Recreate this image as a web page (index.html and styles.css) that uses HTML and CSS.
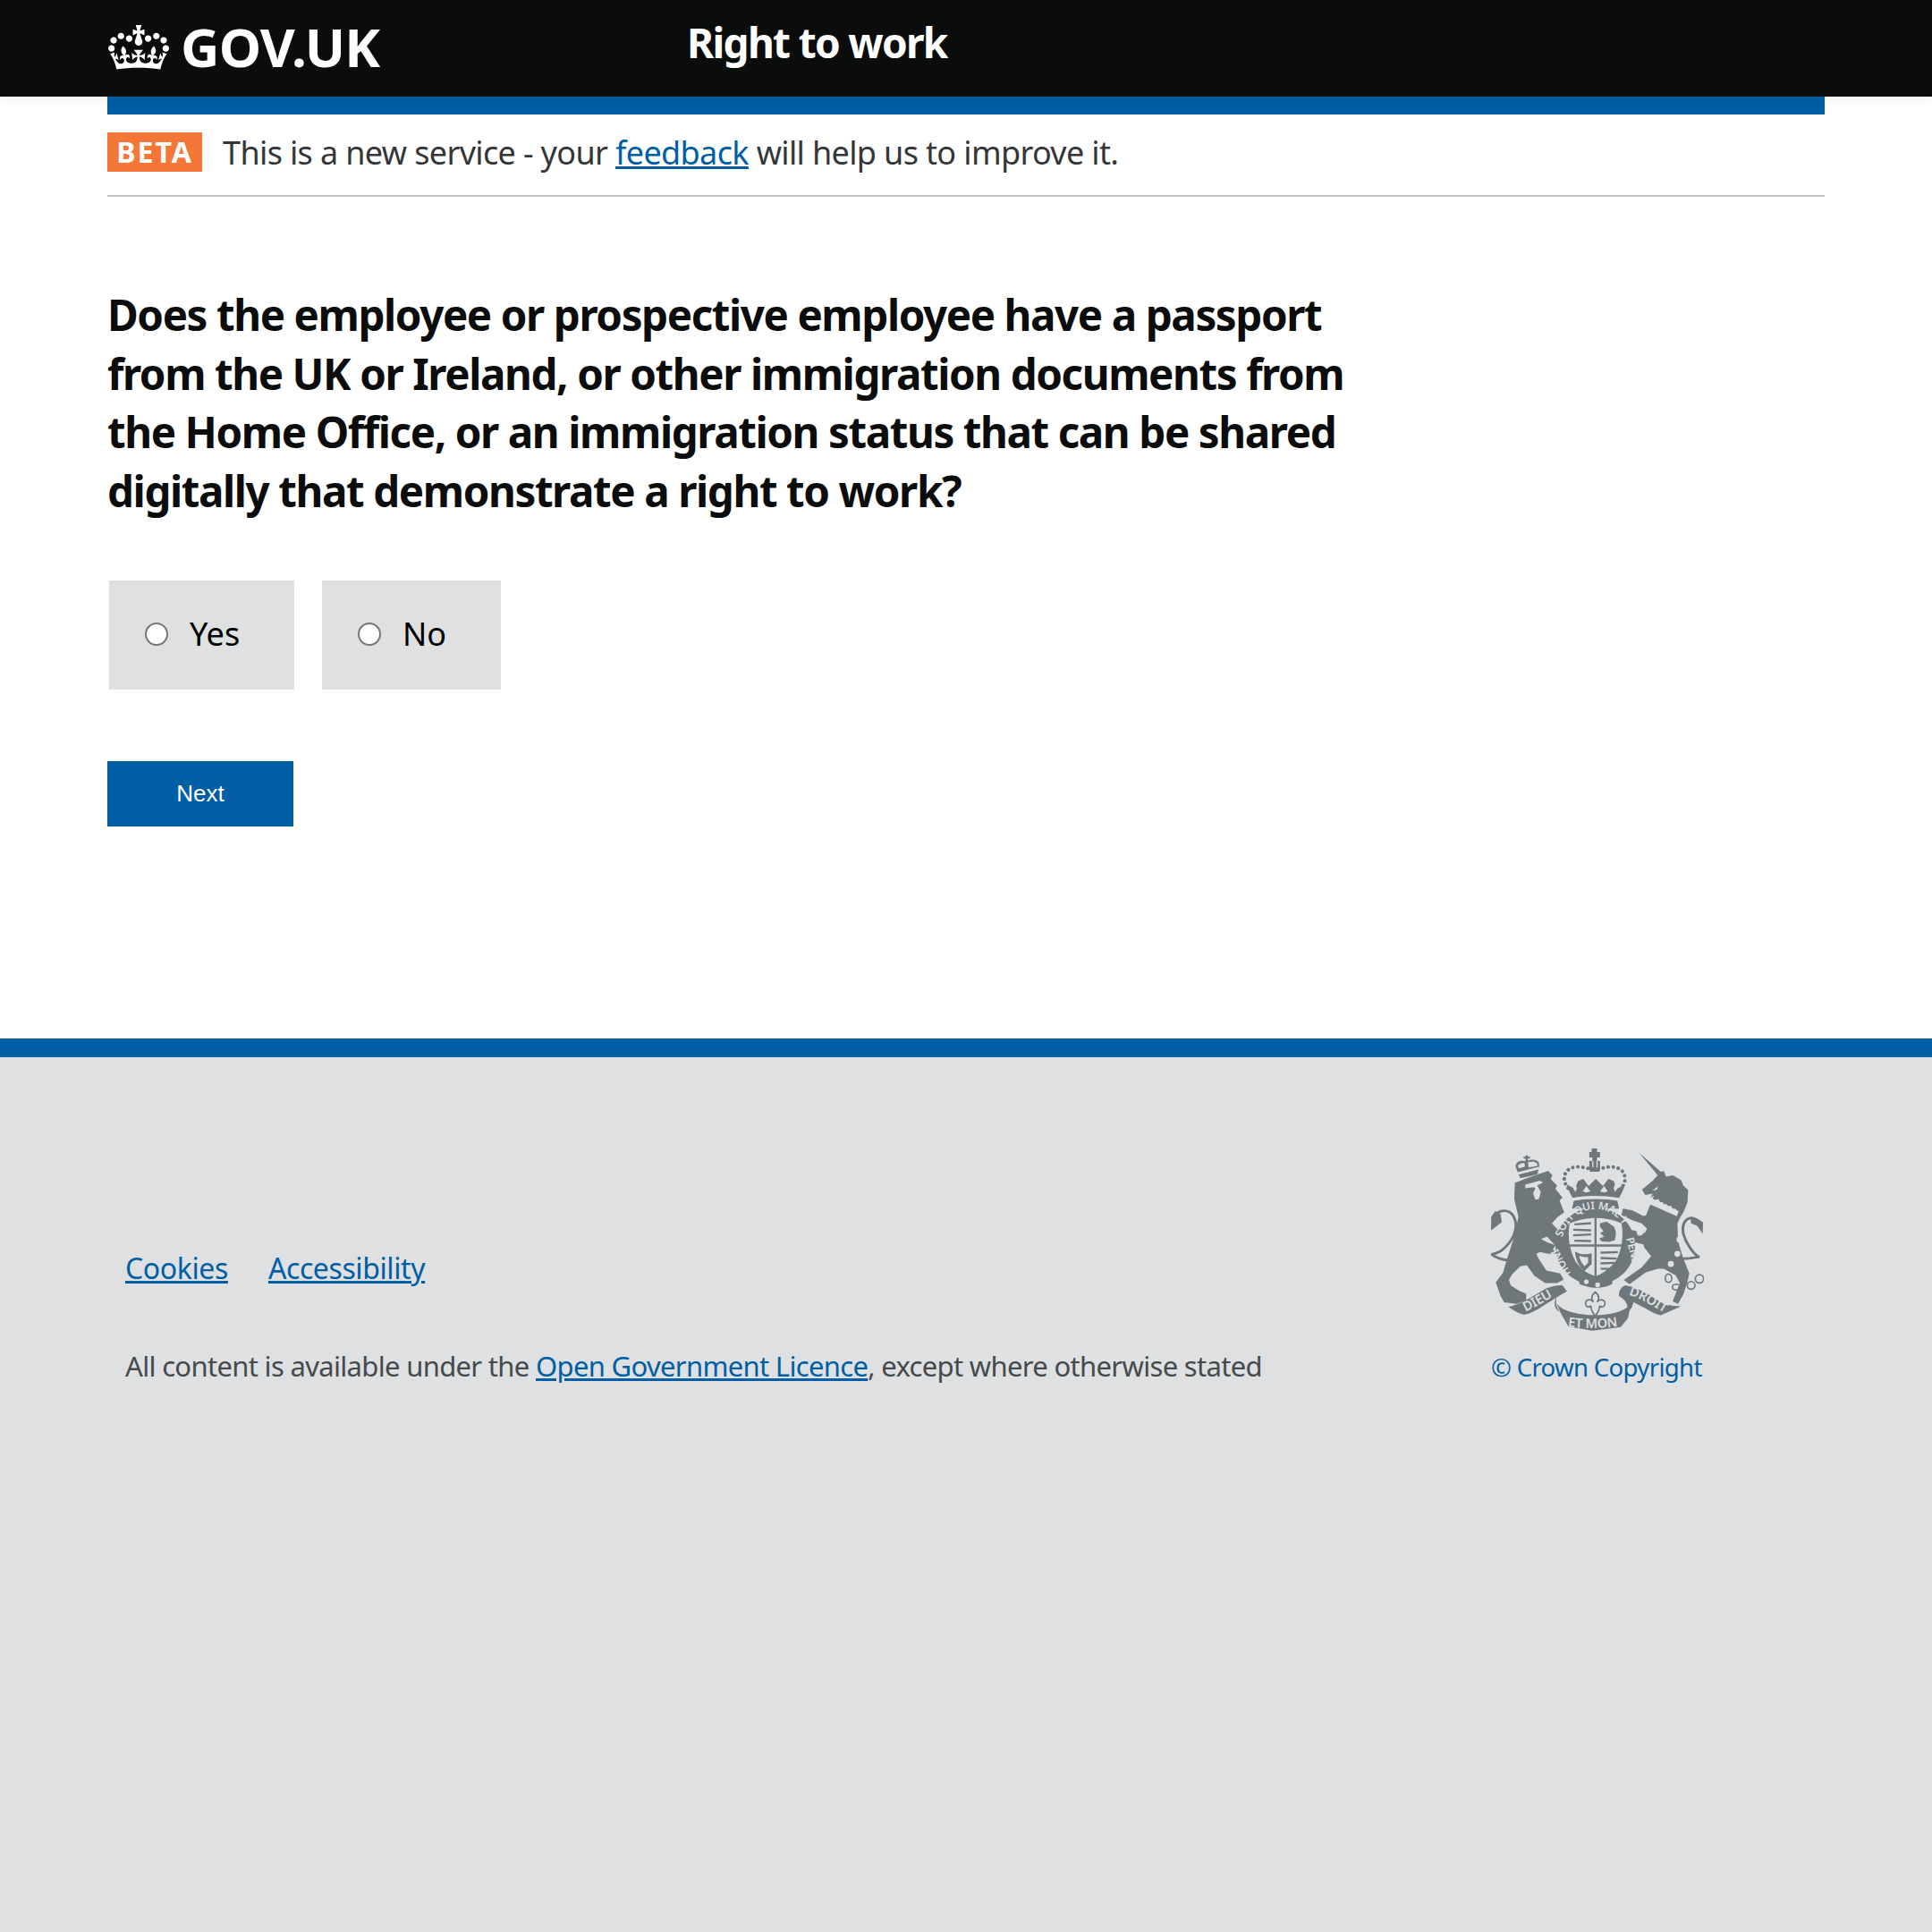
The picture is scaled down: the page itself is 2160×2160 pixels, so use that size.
FILE: index.html
```html
<!DOCTYPE html>
<html lang="en">
<head>
<meta charset="utf-8">
<title>Right to work</title>
<link rel="stylesheet" href="styles.css">
</head>
<body>
<header class="site-header">
  <div class="logo">
    <svg class="crown" viewBox="0 0 132 97" aria-hidden="true"><path fill="#fff" d="M25 30.2c3.5 1.5 7.7-.2 9.1-3.7 1.5-3.6-.2-7.8-3.9-9.2-3.6-1.4-7.6.3-9.1 3.9-1.4 3.5.3 7.5 3.9 9zM9 39.5c3.6 1.5 7.8-.2 9.2-3.7 1.5-3.6-.2-7.8-3.9-9.1-3.6-1.5-7.6.2-9.1 3.8-1.4 3.5.3 7.5 3.8 9zM4.4 57.2c3.5 1.5 7.7-.2 9.1-3.8 1.5-3.6-.2-7.7-3.9-9.1-3.5-1.5-7.6.3-9.1 3.8-1.4 3.5.3 7.6 3.9 9.1zm38.3-21.4c3.5 1.5 7.7-.2 9.1-3.8 1.5-3.6-.2-7.7-3.9-9.1-3.6-1.5-7.6.3-9.1 3.8-1.3 3.6.4 7.7 3.9 9.1zm64.4-5.6c-3.6 1.5-7.8-.2-9.1-3.7-1.5-3.6.2-7.8 3.8-9.2 3.6-1.4 7.7.3 9.2 3.9 1.3 3.5-.4 7.5-3.9 9zm15.9 9.3c-3.6 1.5-7.7-.2-9.1-3.7-1.5-3.6.2-7.8 3.7-9.1 3.6-1.5 7.7.2 9.2 3.8 1.5 3.5-.3 7.5-3.8 9zm4.7 17.7c-3.6 1.5-7.8-.2-9.2-3.8-1.5-3.6.2-7.7 3.9-9.1 3.6-1.5 7.7.3 9.2 3.8 1.3 3.5-.4 7.6-3.9 9.1zM89.3 35.8c-3.6 1.5-7.8-.2-9.2-3.8-1.4-3.6.2-7.7 3.9-9.1 3.6-1.5 7.7.3 9.2 3.8 1.4 3.6-.3 7.7-3.9 9.1zM69.7 17.7l8.9 4.7V9.3l-8.9 2.8c-.2-.3-.5-.6-.9-.9L72.4 0H59.6l3.5 11.2c-.3.3-.6.5-.9.9l-8.8-2.8v13.1l8.8-4.7c.3.3.6.7.9.9l-5 15.4v.1c-.2.8-.4 1.6-.4 2.4 0 4.1 3.1 7.5 7 8.1h.2c.3 0 .7.1 1 .1.4 0 .7 0 1-.1h.2c4-.6 7.1-4.1 7.1-8.1 0-.8-.1-1.7-.4-2.4V34l-5.1-15.4c.4-.2.7-.6 1-.9zM66 92.8c16.9 0 32.8 1.1 47.1 3.2 4-16.9 8.9-26.7 14-33.5l-9.6-3.4c1 4.9 1.1 7.2 0 10.2-1.5-1.4-3-4.3-4.2-8.7L108.6 76c2.8-2 5-3.2 7.5-3.3-4.4 9.4-10 11.9-13.6 11.2-4.3-.8-6.3-4.6-5.6-7.9 1-4.7 5.7-5.9 8-.5 4.3-8.7-3-11.4-7.6-8.8 7.1-7.2 7.9-13.5 2.1-21.1-8 6.1-8.1 12.3-4.5 20.8-4.7-5.4-12.1-2.5-9.5 6.2 3.4-5.2 7.9-2 7.2 3.1-.6 4.3-6.4 7.8-13.5 7.2-10.3-.9-10.9-8-11.2-13.8 2.5-.5 7.1 1.8 11 7.3L80.2 60c-4.1 4.4-8 5.3-12.3 5.4 1.4-4.4 8-11.6 8-11.6H55.5s6.4 7.2 7.9 11.6c-4.2-.1-8-1-12.3-5.4l1.4 16.4c3.9-5.5 8.5-7.7 10.9-7.3-.3 5.8-.9 12.8-11.1 13.8-7.2.6-12.9-2.9-13.5-7.2-.7-5 3.8-8.3 7.1-3.1 2.7-8.7-4.6-11.6-9.4-6.2 3.7-8.5 3.6-14.7-4.6-20.8-5.8 7.6-5 13.9 2.2 21.1-4.7-2.6-11.9.1-7.7 8.8 2.3-5.5 7.1-4.2 8.1.5.7 3.3-1.3 7.1-5.7 7.9-3.5.7-9-1.8-13.5-11.2 2.5.1 4.7 1.3 7.5 3.3l-4.7-15.4c-1.2 4.4-2.7 7.2-4.3 8.7-1.1-3-.9-5.3 0-10.2l-9.5 3.4c5 6.9 9.9 16.7 14 33.5 14.8-2.1 30.8-3.2 47.7-3.2z"/></svg>
    <span class="logo-text">GOV.UK</span>
  </div>
  <span class="service-name">Right to work</span>
</header>
<div class="page-width">
  <div class="blue-bar"></div>
  <div class="phase-banner">
    <strong class="phase-tag">BETA</strong>
    <span>This is a new service - your <a href="#">feedback</a> will help us to improve it.</span>
  </div>
  <main class="main">
    <h1 class="question">Does the employee or prospective employee have a passport from the UK or Ireland, or other immigration documents from the Home Office, or an immigration status that can be shared digitally that demonstrate a right to work?</h1>
    <div class="choices">
      <label class="choice choice-yes"><input class="radio" type="radio" name="rtw"><span>Yes</span></label>
      <label class="choice choice-no"><input class="radio" type="radio" name="rtw"><span>No</span></label>
    </div>
    <button class="next" type="button">Next</button>
  </main>
</div>
<footer class="footer">
  <div class="footer-inner">
    <div class="footer-meta">
      <nav class="footer-links"><a href="#">Cookies</a><a href="#">Accessibility</a></nav>
      <p class="licence">All content is available under the <a href="#">Open Government Licence</a>, except where otherwise stated</p>
    </div>
    <div class="copyright">
      <svg class="crest" viewBox="80 65 715 620" aria-hidden="true">
        <g class="crest-fill">
          <!-- lion crown -->
          <path d="M178 170l-16-40c2-14 14-20 26-18l8 0 0-8-7 0 0-6 7 0 0-5 8 0 0 5 7 0 0 6-7 0 0 7c14-6 30-4 36 6l2 10-6 30z"/>
          <!-- lion -->
          <path d="M160 186L200 170 272 145 286 160 280 172 302 195 296 205 320 235 310 245 326 285 304 300 284 322 306 345 334 395 342 420 328 432 304 408 290 390 268 366 248 374 268 385 296 395 288 410 304 422 272 424 244 418 232 424 240 440 266 480 312 490 324 510 302 522 262 522 226 498 200 462 178 466 150 494 140 512 146 530 174 548 198 558 198 580 166 592 124 587 112 566 96 520 120 488 134 440 156 372 172 300 158 240z"/>
          <!-- unicorn -->
          <path d="M578 85L650 148 660 146 668 165 690 160 718 176 726 195 742 210 740 250 726 285 716 300 706 322 708 370 712 395 726 440 746 490 739 520 726 560 708 592 690 584 714 522 700 496 660 474 640 474 600 486 545 526 526 512 586 470 618 432 594 402 592 392 556 384 544 342 596 355 604 340 586 322 556 312 518 294 523 272 555 278 590 296 600 296 618 250 628 228 616 236 623 222 598 226 587 208 623 178 640 160z"/>
          <!-- imperial crown -->
          <path d="M418 82v-12h18v12h10v18h-10v12h10v32l-4 4h-28l-4-4v-32h10v-12h-10v-18z"/>
          <path d="M354 236c-8-14-16-30-20-46l28 16 10-26 18-8 18 24 24-24 24 24 18-24 18 8 10 26 28-16c-4 16-12 32-20 46-46-8-110-8-156 0z"/>
          <path d="M358 246c46-8 100-8 146 0l6 26H352z"/>
          <!-- garter -->
          <ellipse cx="430" cy="398" rx="134" ry="130"/>
          <path d="M368 490l124 0-6 36c-30 16-70 16-108 0z"/>
          <!-- ribbons -->
          <path d="M138 602C175 596 215 570 262 542 285 532 305 528 320 530L335 550 300 570C296 590 300 605 312 620 296 612 288 596 298 572L250 602C225 618 205 628 190 628 170 624 152 612 138 602z"/>
          <path d="M300 590c20 32 90 40 130 40s100-8 120-40l-10 50-25 30-95 12-80-14-25-43z"/>
          <path d="M510 566C508 548 518 536 530 530 560 535 585 546 605 558L660 592C680 597 700 600 718 600L650 630C635 628 620 620 600 608L558 586C556 602 548 615 536 622 542 604 540 584 510 566z"/>
        </g>
        <g class="crest-line">
          <path d="M140 446c-20-2-40-6-58-20 14-4 24-6 34-14 36-28 56-70 44-104-8-22-26-34-50-26-14 6-22 14-28 26"/>
          <path class="tuft" d="M94 280L81 300 80 345 116 318 112 290z"/>
          <path d="M722 440c26 0 44-4 58-6-12-2-26-20-40-44-16-28-22-58-6-78 12-12 30-12 54 10"/>
          <path class="tuft" d="M750 300L792 318 791 356 772 330 752 322z"/>
        </g>
        <g class="crest-cut">
          <!-- garter inner -->
          <path d="M344 322c28-12 56-18 87-18s60 6 87 18c8 40 2 84-16 122-20 26-42 44-71 56-32-12-58-32-72-60-18-38-22-80-15-118z"/>
          <!-- lion face and crown -->
          <path d="M195 192l48-14 12 6-20 10 12 22-6 24-12 2-8-22 8-16-6-4-28 4zM170 150l70-18 2 8-70 18zM170 128c6-8 14-10 22-9l2 12-20 6zM204 117c10-4 22-4 30 2l2 10-30 5z"/>
          <!-- unicorn collar -->
          <path d="M616 250l6-14 6 6 8 0 6-2 6 10 8 0 6 8 6-2 8 8 8-2 6 10 8 0 12 10-6 16-90-40z"/>
          <path d="M622 212l18-14-2 10z"/>
          <!-- chain links and spots -->
          <circle cx="595" cy="268" r="12"/><circle cx="580" cy="352" r="11"/><circle cx="715" cy="376" r="12"/><circle cx="706" cy="424" r="10"/><circle cx="684" cy="458" r="10"/>
          <!-- crown band -->
          <path d="M356 236c46-8 106-8 150 0l2 10c-46-9-108-9-154 0z"/>
          <path d="M412 150h36v6h-36zM420 112h4v28h-4zM434 112h4v28h-4z"/>
          <path d="M356 206l8 10 4-12-4-14zM504 206l-8 10-4-12 4-14zM400 196l14 18-14 4-12-4zM460 196l-14 18 14 4 12-4z"/>
          <circle cx="400" cy="518" r="8"/><circle cx="438" cy="528" r="8"/>
          <path class="fleur" d="M430 552c14 12 14 24 6 34 10-12 30-10 26 8-2 10-14 10-18 4 2 10-6 26-14 34-8-8-16-24-14-34-4 6-16 6-18-4-4-18 16-20 26-8-8-10-8-22 6-34z"/>
        </g>
        <g class="crest-shield">
          <path d="M431 304v196M344 396h174"/>
          <path class="thin" d="M360 325l56-4M356 343l60 2M356 362l60-3M360 380l56 1M448 420l58-2M448 438l54 2M448 456l46-2M448 474l30 1"/>
        </g>
        <g class="crest-fill">
          <!-- rampant lion, upper right quarter -->
          <path d="M446 322l22-6 26 18 6 20-4 24-20 6-26-2-6-10 16-6-14-12 12-6-12-14z"/>
          <!-- harp, lower left quarter -->
          <path d="M362 416c16 10 34 12 56 6v36l-24 24c-20-18-30-40-32-66zm14 14c2 14 8 26 18 36l12-12v-20c-10 2-20 0-30-4z" fill-rule="evenodd"/>
        </g>
        <g class="crest-beads">
          <path d="M326 172c0-24 16-38 40-40 22-2 38 8 62 6 22 2 40-8 60-6 24 2 42 16 42 40 0 14-8 26-16 36"/>
          <path d="M326 172c0 14 8 26 16 36"/>
        </g>
        <g class="crest-chain">
          <ellipse cx="676" cy="506" rx="11" ry="14"/><ellipse cx="702" cy="536" rx="13" ry="10"/><circle cx="752" cy="530" r="13"/><circle cx="780" cy="508" r="14"/>
        </g>
        <g class="crest-text">
          <path id="garter-top" class="none" d="M318 372c16-64 66-98 112-98 52 0 96 34 112 98"/>
          <path id="dieu" class="none" d="M196 618c36-16 72-40 108-58"/>
          <path id="mon" class="none" d="M338 668c56 8 124 8 180-4"/>
          <path id="droit" class="none" d="M542 562c44 12 84 40 124 62"/>
          <text class="motto"><textPath href="#garter-top" startOffset="1%">SOIT QUI MAL Y</textPath></text>
          <text class="motto big"><textPath href="#dieu">DIEU</textPath></text>
          <text class="motto big"><textPath href="#mon">ET MON</textPath></text>
          <text class="motto big"><textPath href="#droit">DROIT</textPath></text>
          <text class="motto" transform="translate(348 490) rotate(-118)">HONI</text>
          <text class="motto" transform="translate(534 372) rotate(76)">PENSE</text>
        </g>
      </svg>
      <a class="crown-link" href="#">© Crown Copyright</a>
    </div>
  </div>
</footer>
</body>
</html>
```
FILE: styles.css
```css
* { box-sizing: border-box; }
html, body { margin: 0; padding: 0; }
body { background: #dee0e2; font-family: "Noto Sans", Roboto, sans-serif; color: #0b0c0c; min-height: 2160px; }
a { color: #005ea5; }

.site-header { position: relative; background: #0b0c0c; height: 108px; padding-left: 120px; display: flex; align-items: flex-start; color: #fff; box-shadow: 0 4px 10px rgba(0,0,0,.05); }
.logo { display: flex; align-items: center; width: 648px; height: 108px; }
.crown { width: 68px; height: 50px; margin: -2px 0 0 1px; flex: none; }
.logo-text { font-weight: 700; font-size: 60px; line-height: 1; margin: -4px 0 0 13px; letter-spacing: -.8px; }
.service-name { font-weight: 700; font-size: 46px; line-height: 94px; letter-spacing: -1.7px; }

.page-width { background: #fff; padding: 0 120px; height: 1053px; }
.blue-bar { height: 20px; background: #005ea5; }
.phase-banner { display: flex; align-items: center; gap: 23px; height: 92px; padding-bottom: 6px; border-bottom: 2px solid #bfc1c3; font-size: 36px; letter-spacing: -.64px; color: #343638; }
.phase-tag { background: #f47738; color: #fff; font-size: 32px; line-height: 44px; height: 44px; width: 106px; text-align: center; letter-spacing: 2px; }

.main { padding-top: 99px; }
.question { margin: 0 0 67px; font-size: 47.5px; line-height: 65.7px; font-weight: 700; max-width: 1420px; letter-spacing: -1.4px; }
.choices { display: flex; gap: 31px; padding-left: 2px; margin-bottom: 80px; }
.choice { display: flex; align-items: center; gap: 24px; height: 122px; padding: 0 0 2px 40px; background: #dee0e2; font-size: 36px; color: #000; }
.choice-yes { width: 207px; }
.choice-no { width: 200px; }
.radio { appearance: none; margin: 0; width: 26px; height: 26px; border-radius: 50%; border: 2px solid #767676; background: #fff; flex: none; }
.next { display: block; width: 208px; height: 73px; border: 0; padding: 0; background: #005ea5; color: #fff; font-family: "Liberation Sans", Arial, sans-serif; font-size: 26px; }

.footer { background: #dee0e2; border-top: 21px solid #005ea5; padding: 0 140px; }
.footer-inner { display: flex; justify-content: space-between; padding-top: 100px; }
.footer-meta { padding-top: 114px; }
.footer-links { display: flex; gap: 45px; font-size: 32px; line-height: 44px; letter-spacing: -.4px; }
.licence { margin: 65px 0 0; font-size: 31px; line-height: 44px; letter-spacing: -.68px; color: #454a4c; }
.copyright { width: 238px; margin-right: 115px; display: flex; flex-direction: column; align-items: flex-start; }
.crest { width: 238px; height: 207px; display: block; }
.crown-link { margin-top: 20px; font-size: 27.5px; line-height: 40px; text-decoration: none; white-space: nowrap; letter-spacing: -.65px; }

.crest-fill { fill: #6f777b; }
.crest-cut { fill: #dee0e2; }
.crest-line { fill: none; stroke: #6f777b; stroke-width: 9; }
.crest-line .tuft { fill: #6f777b; stroke: none; }
.crest-shield { fill: none; stroke: #6f777b; stroke-width: 7; }
.crest-shield .thin { stroke-width: 7; }
.crest-beads { fill: none; stroke: #6f777b; stroke-width: 12; stroke-linecap: round; stroke-dasharray: 0.1 17; }
.crest-chain { fill: none; stroke: #6f777b; stroke-width: 5; }
.none { fill: none; }
.motto { fill: #dee0e2; font-family: "Noto Sans", sans-serif; font-size: 36px; font-weight: 600; letter-spacing: -.5px; }
.motto.big { font-size: 44px; }
.fleur { stroke: #6f777b; stroke-width: 5; }
```
